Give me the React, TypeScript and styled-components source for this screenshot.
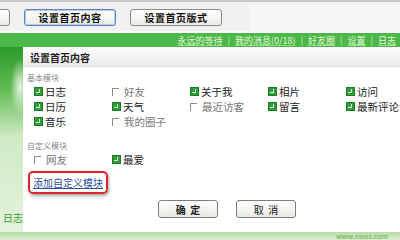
import React from 'react';
import styled, {createGlobalStyle} from 'styled-components';

const GlobalStyle = createGlobalStyle`
  html, body {
    margin: 0;
    padding: 0;
    background: #fff;
  }
  body {
    font-family: "Noto Sans CJK SC", "Liberation Sans", sans-serif;
  }
`;

type Module = {
    name: string;
    on: boolean;
};

const basicModules: Module[] = [
    {name: '日志', on: true},
    {name: '好友', on: false},
    {name: '关于我', on: true},
    {name: '相片', on: true},
    {name: '访问', on: true},
    {name: '日历', on: true},
    {name: '天气', on: true},
    {name: '最近访客', on: false},
    {name: '留言', on: true},
    {name: '最新评论', on: true},
    {name: '音乐', on: true},
    {name: '我的圈子', on: false},
];

const customModules: Module[] = [
    {name: '网友', on: false},
    {name: '最爱', on: true},
];

const navLinks = ['永远的等待', '我的消息(0/18)', '好友圈', '设置', '日志'];

const ModuleItem = ({name, on}: Module) => (
    <Item $on={on}>
        {on ? <CheckedBox/> : <EmptyBox/>}
        <span>{name}</span>
    </Item>
);

const App = () => {
    return (
        <Page>
            <GlobalStyle/>
            <TopBar>
                <TopButton $cut/>
                <TopButton $active>设置首页内容</TopButton>
                <TopButton>设置首页版式</TopButton>
                <TopFill/>
            </TopBar>
            <Gap/>
            <NavBar>
                {navLinks.map((l, i) => (
                    <React.Fragment key={l}>
                        {i > 0 && <NavSep>|</NavSep>}
                        <NavLink>{l}</NavLink>
                    </React.Fragment>
                ))}
            </NavBar>
            <Body>
                <Side>
                    <SideLabel>日志</SideLabel>
                </Side>
                <Dialog>
                    <DialogTitle>设置首页内容</DialogTitle>
                    <DialogContent>
                        <SectionLabel>基本模块</SectionLabel>
                        <Grid>
                            {basicModules.map(m => <ModuleItem key={m.name} {...m}/>)}
                        </Grid>
                        <SectionLabel $top={11}>自定义模块</SectionLabel>
                        <Grid>
                            {customModules.map(m => <ModuleItem key={m.name} {...m}/>)}
                        </Grid>
                        <AddWrap>
                            <AddLink>添加自定义模块</AddLink>
                        </AddWrap>
                        <Actions>
                            <DlgButton $bold>确&nbsp;&nbsp;定</DlgButton>
                            <DlgButton>取&nbsp;&nbsp;消</DlgButton>
                        </Actions>
                    </DialogContent>
                </Dialog>
                <RightEdge/>
            </Body>
            <Footer>
                <FooterText>www.xxxxx.com</FooterText>
            </Footer>
        </Page>
    );
};

export default App;

const Page = styled.div`
  width: 400px;
  height: 240px;
  overflow: hidden;
  display: flex;
  flex-direction: column;
  background: #fff;
`;

const TopBar = styled.div`
  height: 31px;
  flex: none;
  display: flex;
  align-items: center;
  gap: 14px;
  padding-top: 2px;
  background: #f1f1f1;
  border-top: 2px solid #c8c8c8;
  box-sizing: border-box;
`;

const TopButton = styled.div<{ $active?: boolean; $cut?: boolean }>`
  width: ${p => (p.$cut ? '20px' : '92px')};
  margin-left: ${p => (p.$cut ? '-10px' : '0')};
  height: 17px;
  box-sizing: border-box;
  border: 1px solid ${p => (p.$active ? '#5a7fc4' : '#8a8a8a')};
  border-radius: 3px;
  background: linear-gradient(#ffffff, #ecebe6);
  box-shadow: ${p => (p.$active ? 'inset 0 0 0 1px #b9cdf0' : 'none')};
  font-size: 10px;
  font-weight: 700;
  color: #111;
  display: flex;
  align-items: center;
  justify-content: center;
  letter-spacing: 0.5px;
`;

const TopFill = styled.div`
  flex: 1;
  align-self: stretch;
  margin-left: 14px;
  background: #f6f6f6;
`;

const Gap = styled.div`
  height: 2px;
  flex: none;
  background: #fafafa;
`;

const NavBar = styled.div`
  height: 14px;
  flex: none;
  background: #4db84a;
  display: flex;
  align-items: center;
  justify-content: flex-end;
  padding-right: 4px;
  gap: 3px;
  font-size: 9px;
  color: #e6f8d8;
`;

const NavLink = styled.span`
  text-decoration: underline;
  text-decoration-color: rgba(230, 248, 216, 0.5);
`;

const NavSep = styled.span`
  color: #c8ecb8;
  margin: 0 2px;
`;

const Body = styled.div`
  flex: 1;
  display: flex;
  min-height: 0;
`;

const Side = styled.div`
  width: 23px;
  flex: none;
  display: flex;
  align-items: flex-end;
  background: radial-gradient(ellipse 14px 40px at 20px 40px, rgba(255, 255, 255, 0.85), rgba(255, 255, 255, 0) 70%),
  linear-gradient(#2f9a2c 0px, #5dbb4f 40px, #cfeac4 90px, #e4f2dc 100%);
`;

const SideLabel = styled.div`
  font-size: 10px;
  white-space: nowrap;
  color: #3b9a2f;
  padding: 0 0 7px 3px;
`;

const Dialog = styled.div`
  flex: 1;
  display: flex;
  flex-direction: column;
  background: #fff;
  border-right: 1px solid #eee;
`;

const DialogTitle = styled.div`
  height: 20px;
  flex: none;
  box-sizing: border-box;
  padding: 3px 0 0 7px;
  font-size: 10px;
  font-weight: 700;
  color: #222;
  background: linear-gradient(#fdfdfd, #ececec);
  border-bottom: 1px solid #dedede;
`;

const DialogContent = styled.div`
  flex: 1;
  padding: 5px 0 0 4px;
  display: flex;
  flex-direction: column;
`;

const SectionLabel = styled.div<{ $top?: number }>`
  font-size: 8px;
  color: #888;
  margin-top: ${p => p.$top || 0}px;
  height: 12px;
  line-height: 12px;
`;

const Grid = styled.div`
  display: grid;
  grid-template-columns: repeat(5, 78px);
  grid-auto-rows: 15px;
  padding-left: 7px;
`;

const Item = styled.div<{ $on: boolean }>`
  display: flex;
  align-items: center;
  gap: 2px;
  font-size: 10.5px;
  white-space: nowrap;
  color: ${p => (p.$on ? '#222' : '#777')};
`;

const CheckedBox = styled.span`
  width: 7px;
  height: 7px;
  flex: none;
  background: #2f9e3a;
  border: 1px solid #1d7a28;
  position: relative;
  &::after {
    content: '';
    position: absolute;
    left: 1px;
    top: 1px;
    width: 3px;
    height: 3px;
    border-right: 1px solid #d8f3d4;
    border-bottom: 1px solid #d8f3d4;
  }
`;

const EmptyBox = styled.span`
  width: 6px;
  height: 7px;
  flex: none;
  border-top: 1px solid #8a8a8a;
  border-left: 1px solid #8a8a8a;
  margin-right: 3px;
`;

const AddWrap = styled.div`
  align-self: flex-start;
  margin: 4px 0 0 1px;
  width: 80px;
  height: 23px;
  box-sizing: border-box;
  border: 2px solid #e0242a;
  border-radius: 5px;
  box-shadow: 1px 2px 3px rgba(0, 0, 0, 0.35);
  display: flex;
  align-items: center;
  justify-content: center;
`;

const AddLink = styled.span`
  font-size: 10px;
  color: #2c4f9e;
  text-decoration: underline;
`;

const Actions = styled.div`
  display: flex;
  gap: 18px;
  padding-left: 131px;
  margin-top: 6px;
`;

const DlgButton = styled.div<{ $bold?: boolean }>`
  width: 60px;
  height: 18px;
  box-sizing: border-box;
  border: 1px solid #7c7c7c;
  border-radius: 3px;
  background: linear-gradient(#ffffff, #e9e8e2);
  font-size: 10px;
  font-weight: ${p => (p.$bold ? 700 : 400)};
  color: #222;
  display: flex;
  align-items: center;
  justify-content: center;
`;

const RightEdge = styled.div`
  width: 5px;
  flex: none;
  background: linear-gradient(90deg, #f4f4f4 0, #f4f4f4 2px, #c6c6c6 2px, #c6c6c6 4px, #fff 4px);
`;

const Footer = styled.div`
  height: 8px;
  flex: none;
  background: linear-gradient(#b9dba8, #d9ecd0);
  display: flex;
  justify-content: flex-end;
  align-items: center;
  padding-right: 12px;
  overflow: hidden;
`;

const FooterText = styled.span`
  font-size: 7px;
  line-height: 8px;
  color: #56b03d;
`;
